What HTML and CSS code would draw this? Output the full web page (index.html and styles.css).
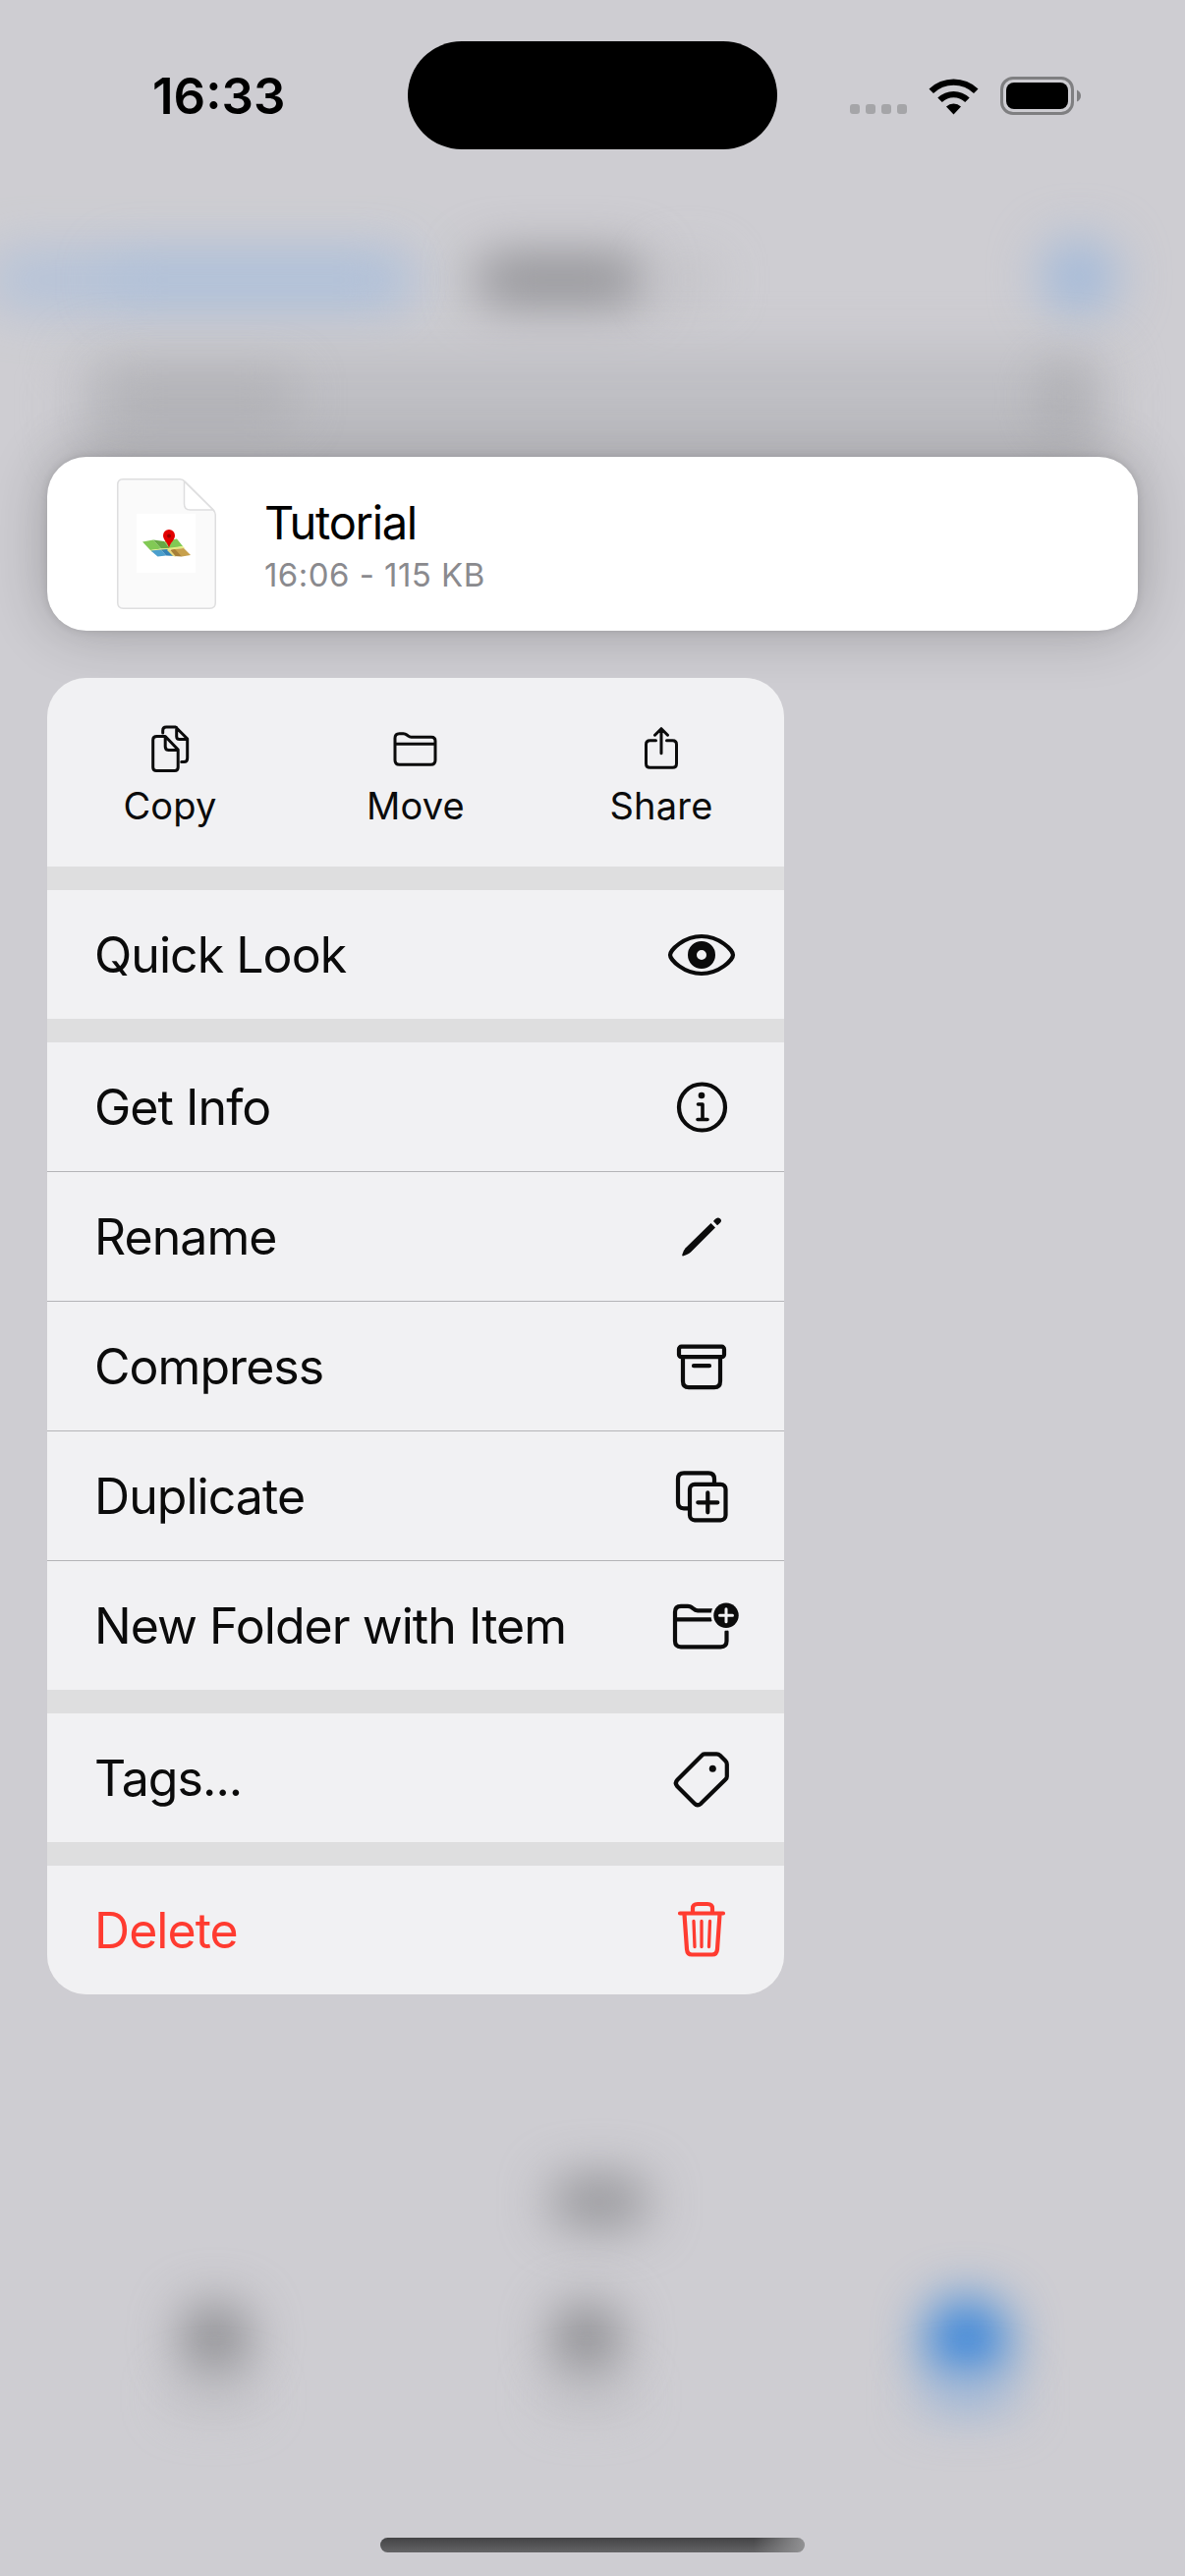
FILE: index.html
```
<!DOCTYPE html>
<html lang="en">
<head>
<meta charset="utf-8">
<title>Files</title>
<link rel="stylesheet" href="styles.css">
</head>
<body>
<div class="screen">
  <div class="backdrop" aria-hidden="true">
    <i class="haze haze-back"></i><i class="haze haze-back-end"></i>
    <i class="haze haze-title"></i><i class="haze haze-chevron"></i><i class="haze haze-more"></i>
    <i class="haze haze-search"></i><i class="haze haze-search-text"></i><i class="haze haze-mic"></i>
    <i class="haze haze-count"></i>
    <i class="haze haze-tab tab-one"></i><i class="haze haze-label label-one"></i>
    <i class="haze haze-tab tab-two"></i><i class="haze haze-label label-two"></i>
    <i class="haze haze-tab tab-three"></i><i class="haze haze-label label-three"></i>
  </div>

  <header class="status">
    <div class="clock">16:33</div>
    <div class="island"></div>
    <div class="indicators">
      <svg class="signal" width="58" height="10" viewBox="0 0 58 10" fill="#a5a5a8"><rect width="10" height="10" rx="3"/><rect x="16" width="10" height="10" rx="3"/><rect x="32" width="10" height="10" rx="3"/><rect x="48" width="10" height="10" rx="3"/></svg>
      <svg class="wifi" width="51" height="38" viewBox="0 0 51 38"><path d="M0.5 11.5A36 36 0 0 1 50.500 11.500L46 16A29.500 29.500 0 0 0 5 16ZM9.300 20.500A23.500 23.500 0 0 1 41.700 20.500L37.200 25A17 17 0 0 0 13.800 25ZM18 29.500A11 11 0 0 1 33 29.500L25.500 37.500Z"/></svg>
      <svg class="battery" width="82" height="39" viewBox="0 0 82 39"><rect x="1.500" y="1.500" width="72" height="36" rx="11.500" fill="none" stroke="#7f7f81" stroke-width="3"/><rect x="6" y="6" width="63" height="27" rx="8"/><path d="M78 13.500Q82 15.500 82 19.500T78 25.500Z" fill="#7f7f81"/></svg>
    </div>
  </header>

  <article class="file-card">
    <svg class="file-icon" width="101" height="133" viewBox="0 0 101 133">
      <path d="M6 .75H64Q67 .75 69 3L98 32Q100.250 34.500 100.250 37V126.500Q100.250 132.250 94.500 132.250H6.500Q.75 132.250.75 126.500V6.500Q.75.750 6 .750Z" fill="#fafafa" stroke="#dededf" stroke-width="1.500"/>
      <path d="M68.500 3V26Q68.500 32 74.500 32H98Z" fill="#fff" stroke="#dededf" stroke-width="1.500"/>
      <rect x="20" y="36" width="60" height="60" fill="#fff"/>
      <path d="M26 64.500L37 62.500 45 71.500 34 73Z" fill="#82c955"/><path d="M37 62.500L48 64 54 71.500 45 71.500Z" fill="#67a844"/><path d="M48 64L61 61.500 67 69 54 71.500Z" fill="#82c955"/>
      <path d="M34 73L67 69 69 71 36 75Z" fill="#e5ea83"/>
      <path d="M34.500 73.500L45 72.500 50 78.500 41.500 79.500Z" fill="#4b9fcd"/><path d="M45 72.500L51 72 59 79 50 78.500Z" fill="#3482b5"/><path d="M55 72.500L68 71 75 78 66 79.500Z" fill="#c7a04c"/><path d="M54 73L59 72 66 79.500 58 79Z" fill="#a77f37"/><path d="M51 73L54 72.500 60 79.500 57 79Z" fill="#e3d680"/>
      <path d="M53 71C52 65 47 63 47 58A6 6 0 0 1 59 58C59 63 54 65 53 71Z" fill="#e30000"/><circle cx="53" cy="58.500" r="2" fill="#9a0000"/>
    </svg>
    <div class="file-text">
      <h1 class="file-name">Tutorial</h1>
      <p class="file-meta">16:06 - 115 KB</p>
    </div>
  </article>

  <nav class="menu">
    <div class="actions">
      <button class="action">
        <svg class="action-icon" viewBox="-2.700 0 48 48"><path d="M14 8V5.500Q14 2 17.500 2H27L39 14V33.500Q39 37.500 35.500 37.500H33M28 2.500V11.500Q28 14.500 31 14.500H39M8 11.500H16.500L29.500 25V43Q29.500 46.500 26 46.500H7.500Q4 46.500 4 43V15Q4 11.500 8 11.500ZM16.500 12V22Q16.500 25.500 20 25.500H29"/></svg>
        <span>Copy</span>
      </button>
      <button class="action">
        <svg class="action-icon" viewBox="0.500 -0.700 48 48"><path d="M3.500 35V12.500Q3.500 8 8 8H12Q14 8 15.500 9.300L17 10.500Q18.300 11.500 20 11.500H40.500Q44.500 11.500 44.500 15.500V35Q44.500 39.500 40 39.500H8Q3.500 39.500 3.500 35ZM4 18.500H44"/></svg>
        <span>Move</span>
      </button>
      <button class="action">
        <svg class="action-icon" viewBox="0 -0.700 48 48"><path d="M18.500 15H12.500Q8.500 15 8.500 19V38.500Q8.500 42.500 12.500 42.500H35.500Q39.500 42.500 39.500 38.500V19Q39.500 15 35.500 15H29.500M24 28V4M17.500 9.500L24 3 30.500 9.500"/></svg>
        <span>Share</span>
      </button>
    </div>

    <div class="group">
      <button class="item"><span>Quick Look</span>
        <svg class="icon" viewBox="0 0 80 64"><path d="M8 32C8 27 22 13 40 13S72 27 72 32 58 51 40 51 8 37 8 32Z"/><circle cx="40" cy="32" r="9.500" stroke-width="9"/></svg>
      </button>
    </div>

    <div class="group">
      <button class="item"><span>Get Info</span>
        <svg class="icon" viewBox="0 0 80 64"><circle cx="40.500" cy="32" r="23.500"/><circle cx="40" cy="20" r="3.300" fill="currentColor" stroke="none"/><path d="M36.500 29H41V44M36 44.500H46" stroke-width="3.600"/></svg>
      </button>
      <button class="item"><span>Rename</span>
        <svg class="icon" viewBox="0 -1.500 80 64"><g fill="currentColor" stroke="none"><path d="M49.500 16.500L54 21 29 46Q27 48 21 50Q20 50 20.300 48.500Q22 43 24.500 41ZM52 14.500L53.700 12.500Q56.500 9.700 59 12T58 17L56 18.700Z"/></g></svg>
      </button>
      <button class="item"><span>Compress</span>
        <svg class="icon" viewBox="0 0.300 80 64"><rect x="17" y="12" width="46" height="10.500" rx="2.500"/><path d="M21 22.500V47Q21 53.500 27 53.500H53Q59 53.500 59 47V22.500M32 31.500H48"/></svg>
      </button>
      <button class="item"><span>Duplicate</span>
        <svg class="icon" viewBox="0 3.700 80 64"><path d="M28 48H22Q16 48 16 42V18Q16 12 22 12H47Q53 12 53 18V23"/><rect x="28" y="23.500" width="36.500" height="36.500" rx="5"/><path d="M46.300 32V52M36.300 42H56.300"/></svg>
      </button>
      <button class="item"><span>New Folder with Item</span>
        <svg class="icon" viewBox="0 -0.800 80 64"><path d="M50.500 15.500H36Q33.500 15.500 31.500 13.500L30 12.300Q28.500 11 26 11H19Q13 11 13 17V46.500Q13 52.500 19 52.500H59.500Q65.500 52.500 65.500 46.500V37M14 24.500H49.500"/><circle cx="65" cy="20.500" r="15.500" fill="#f1f1f3" stroke="none"/><circle cx="65" cy="20.500" r="12.700" fill="currentColor" stroke="none"/><path d="M65 14V27M58.500 20.500H71.500" stroke="#f1f1f3" stroke-width="3"/></svg>
      </button>
    </div>

    <div class="group">
      <button class="item"><span>Tags...</span>
        <svg class="icon" viewBox="-0.300 -0.800 80 64"><path d="M42.500 6.500H55Q57 6.500 58.500 8L64 13.500Q65.500 15 65.500 17V29.500Q65.500 31 64 32.500L39 57Q35.500 60 32.500 57L15 39.500Q12 36 15 33L40 8Q41 6.500 42.500 6.500Z"/><circle cx="51" cy="21.500" r="3.500" fill="currentColor" stroke="none"/></svg>
      </button>
    </div>

    <div class="group">
      <button class="item item-delete"><span>Delete</span>
        <svg class="icon" viewBox="0 1.500 80 64"><path d="M18 16H62M31 15V11Q31 6.500 36 6.500H46Q51 6.500 51 11V15M22.500 17L25 52.500Q25.500 58 30 58H51Q55.500 58 56 52.500L58.500 17"/><path d="M32 24L33 50M40 24V50M48.500 24L47.500 50" stroke-width="3.300"/></svg>
      </button>
    </div>
  </nav>

  <div class="home-indicator"></div>
</div>
</body>
</html>
```
FILE: styles.css
```
* { box-sizing: border-box; }
body { margin: 0; font-family: Inter, "Liberation Sans", sans-serif; color: #000; }
.screen {
  position: relative;
  width: 1206px;
  height: 2622px;
  overflow: hidden;
  display: flex;
  flex-direction: column;
  background: #cecdd2;
}

/* Out-of-focus page behind the menu */
.backdrop { position: absolute; inset: 0; overflow: hidden; }
.haze { position: absolute; filter: blur(26px); }
.haze-back { left: -10px; top: 256px; width: 435px; height: 58px; background: #adc0db; border-radius: 20px; opacity: .8; }
.haze-back-end { left: 110px; top: 262px; width: 290px; height: 46px; background: #a8bdd9; opacity: .5; }
.haze-title { left: 484px; top: 260px; width: 172px; height: 50px; background: #8e8e92; border-radius: 20px; }
.haze-chevron { left: 670px; top: 265px; width: 60px; height: 40px; background: #bdbdc1; opacity: .7; }
.haze-more { left: 1060px; top: 244px; width: 76px; height: 76px; border-radius: 50%; background: #9fb8da; }
.haze-search { left: 76px; top: 358px; width: 1054px; height: 110px; background: #bebec3; border-radius: 30px; }
.haze-search-text { left: 110px; top: 382px; width: 190px; height: 44px; background: #a9a9ad; opacity: .7; }
.haze-mic { left: 1062px; top: 374px; width: 42px; height: 60px; background: #a4a4a8; opacity: .8; }
.haze-count { left: 562px; top: 2218px; width: 96px; height: 46px; border-radius: 20px; background: #8c8c90; }
.haze-tab { top: 2346px; width: 66px; height: 70px; border-radius: 30px; background: #86868a; }
.haze-label { top: 2424px; width: 86px; height: 30px; background: #b7b7bb; }
.tab-one { left: 186px; }
.label-one { left: 174px; opacity: .6; }
.tab-two { left: 564px; }
.label-two { left: 556px; opacity: .6; }
.tab-three { left: 942px; width: 84px; height: 84px; top: 2340px; border-radius: 50%; background: #2e80da; }
.label-three { left: 938px; width: 94px; background: #9fb7d8; }

.status {
  position: relative;
  height: 465px;
  flex: none;
  padding: 42px 106px 0 155px;
  display: grid;
  grid-template-columns: 260px 376px 1fr;
  align-items: start;
}
.clock { font-size: 51px; font-weight: 600; line-height: 60px; padding-top: 26px; }
.island { width: 376px; height: 110px; border-radius: 55px; background: #000; }
.indicators { display: flex; justify-content: flex-end; align-items: flex-start; padding-top: 36px; }
.signal { margin: 28px 22px 0 0; }
.wifi { margin: 1px 22px 0 0; }

.file-card {
  position: relative;
  flex: none;
  height: 177px;
  margin: 0 48px;
  padding: 0 71px;
  display: flex;
  align-items: center;
  gap: 49px;
  background: #fff;
  border-radius: 40px;
  box-shadow: 0 0 8px rgba(0,0,0,.12), 0 0 60px rgba(0,0,0,.24);
}
.file-name { margin: 0; font-size: 47px; font-weight: 400; line-height: 58px; letter-spacing: -1.3px; }
.file-meta { margin: 4px 0 0; font-size: 33px; line-height: 40px; letter-spacing: .45px; color: #8a8a8e; }

.menu {
  position: relative;
  flex: none;
  width: 750px;
  margin: 48px 0 0 48px;
  display: flex;
  flex-direction: column;
  gap: 24px;
  overflow: hidden;
  border-radius: 40px;
  background: #dededf;
  color: #0b0b0b;
}
button { border: 0; padding: 0; margin: 0; font: inherit; color: inherit; background: none; }
.actions { height: 192px; display: grid; grid-template-columns: repeat(3, 1fr); background: #f1f1f3; }
.action { display: flex; flex-direction: column; align-items: center; padding-top: 48px; font-size: 38px; line-height: 46px; letter-spacing: .2px; gap: 11px; }
.action-icon { width: 48px; height: 48px; fill: none; stroke: currentColor; stroke-width: 3; stroke-linecap: round; stroke-linejoin: round; }
.group { background: #f1f1f3; }
.item {
  width: 100%;
  height: 131px;
  padding: 0 44px 0 48px;
  display: flex;
  align-items: center;
  justify-content: space-between;
  font-size: 50px;
  line-height: 60px;
  letter-spacing: -0.95px;
}
.item + .item { height: 132px; border-top: 1px solid #b4b4b7; }
.icon { width: 80px; height: 64px; fill: none; stroke: currentColor; stroke-width: 4.2; stroke-linecap: round; stroke-linejoin: round; }
.item-delete { color: #ff3b30; }

.home-indicator {
  position: relative;
  width: 432px;
  height: 15px;
  margin: auto auto 24px;
  border-radius: 8px;
  background: linear-gradient(90deg, transparent 88%, #929294), linear-gradient(#434345, #646466);
}
```
